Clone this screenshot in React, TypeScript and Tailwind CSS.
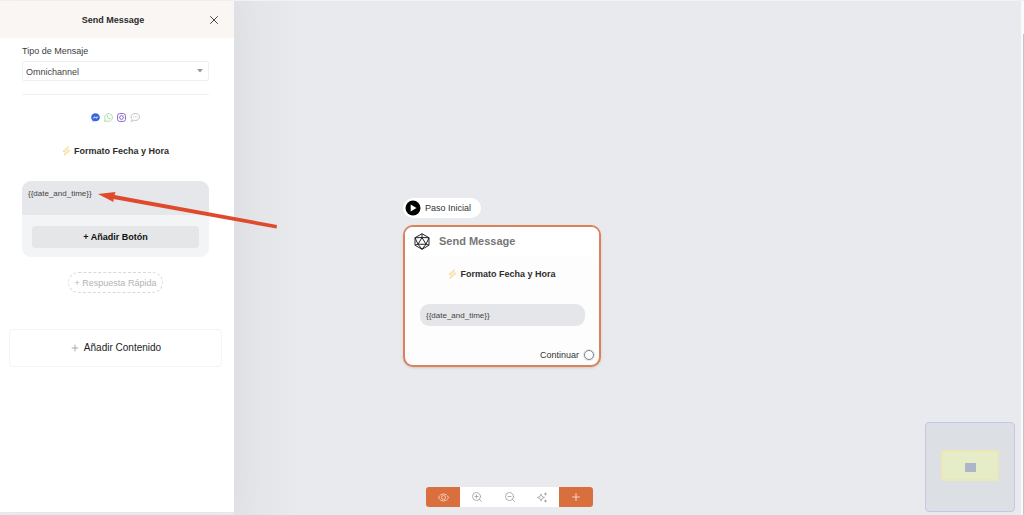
import type { ReactNode } from 'react';
import { Plus, X, ZoomIn, ZoomOut } from 'lucide-react';

function Bolt() {
  return (
    <svg viewBox="0 0 16 18" className="h-[10px] w-[9px] shrink-0" fill="#fff3cf" stroke="#f7d795" strokeWidth="1.5" strokeLinejoin="round" aria-hidden="true">
      <path d="M11.5 1 1.5 9.5 7 10.5 3.5 17 14.5 8 8.5 7.2Z" />
    </svg>
  );
}

function Messenger() {
  return (
    <svg viewBox="0 0 18 18" className="size-[9px]" aria-hidden="true">
      <path d="M9 .3C4 .3 .3 4 .3 8.700c0 2.600 1.100 4.700 2.900 6.200v2.800l2.700-1.500c1 .3 2 .4 3.100.4 5 0 8.700-3.500 8.700-8.200S14 .3 9 .3Z" fill="#3a66dc" />
      <path d="m3.600 11 3.700-4 2.500 2.200 4.600-2.400-3.700 4-2.500-2.100Z" fill="#fff" stroke="#fff" strokeWidth=".5" />
    </svg>
  );
}

function WhatsApp() {
  return (
    <svg viewBox="0 0 18 18" className="size-[9px]" fill="none" stroke="#8fd48b" strokeWidth="1.5" aria-hidden="true">
      <path d="m1 17 1.300-4.300A7.800 7.800 0 1 1 5.400 15.800Z" />
      <path d="M6.300 5.200c-1.500 1.500.2 4 1.800 5.500s3.800 2.700 5 1.100c.6-.8-.8-1.500-1.600-1.800l-1.200 1C9 10.500 8 9.400 7.300 8.200l.8-1.100c-.4-1-.9-2-1.800-1.900Z" fill="#8fd48b" stroke="none" />
    </svg>
  );
}

function Instagram() {
  return (
    <svg viewBox="0 0 18 18" className="size-[9px]" fill="none" stroke="#7e57c2" strokeWidth="1.800" aria-hidden="true">
      <rect x="1.200" y="1.200" width="15.600" height="15.600" rx="4" />
      <circle cx="9" cy="9" r="3.700" />
      <circle cx="13.400" cy="4.600" r=".6" fill="#7e57c2" stroke="none" />
    </svg>
  );
}

function Chat() {
  return (
    <svg viewBox="0 0 20 18" className="h-[9px] w-[10px]" fill="none" stroke="#aeb0b3" strokeWidth="1.500" aria-hidden="true">
      <path d="M10.500 1C5.500 1 2 3.900 2 7.800c0 2.100.9 3.700 2.300 4.900 0 1.600-1 2.800-2.400 3.900 2.200 0 4-.8 5.200-2 1.100.3 2.200.4 3.400.4 5 0 8.500-3 8.500-7.200S15.500 1 10.500 1Z" />
      <path d="M6.200 7.800h1.600m2 0h1.600m2 0H15" strokeWidth="1.700" />
    </svg>
  );
}

function Die() {
  return (
    <svg viewBox="0 0 32 34" className="h-[17px] w-4" fill="none" stroke="#242424" strokeWidth="2" strokeLinejoin="round" aria-hidden="true">
      <path d="M16 1.500 30 9.500v15L16 32.500 2 24.500v-15Z" />
      <path d="m16 9 8 13.500H8ZM16 1.500V9M2 9.500 16 9l14 .5M2 9.500l6 13-6 2m28-15-6 13 6 2M8 22.500l8 10 8-10" />
    </svg>
  );
}

function Sparkles() {
  return (
    <svg viewBox="0 0 22 22" className="size-[11px]" fill="none" stroke="currentColor" strokeWidth="1.700" strokeLinejoin="round" aria-hidden="true">
      <path d="m8 4 2 5 5 2-5 2-2 5-2-5-5-2 5-2Z" />
      <path d="M17 1v6m-3-3h6m-3 11v6m-3-3h6" />
    </svg>
  );
}

function FormatTitle() {
  return (
    <h2 className="flex items-center justify-center gap-[3px] text-[9px] leading-3 font-bold text-[#2d2d2d]">
      <Bolt />
      Formato Fecha y Hora
    </h2>
  );
}

function ToolButton({ label, accent = false, children }: { label: string; accent?: boolean; children: ReactNode }) {
  return (
    <button
      type="button"
      aria-label={label}
      className={accent ? 'flex h-5 w-[34px] items-center justify-center bg-[#d96f3d] text-[#ffe3d5] first:rounded-l-[3px] last:rounded-r-[3px]' : 'flex h-5 w-[33px] items-center justify-center bg-white text-[#a0a0a0]'}
    >
      {children}
    </button>
  );
}

function Sidebar() {
  return (
    <aside className="mb-[3px] w-[234px] shrink-0 bg-white shadow-[0_0_40px_rgba(0,0,0,0.03)]">
      <header className="flex h-[37px] items-center bg-[#faf6f3] pr-3 pl-5">
        <h1 className="flex-1 text-center text-[9px] leading-3 font-bold text-[#2b2b2b]">Send Message</h1>
        <button type="button" aria-label="Cerrar" className="flex size-4 items-center justify-center text-[#444]">
          <X size={14} strokeWidth={1.7} />
        </button>
      </header>

      <div className="px-[22px] pt-[7px]">
        <label htmlFor="message-type" className="block text-[9px] leading-3 text-[#3d3d3d]">Tipo de Mensaje</label>
        <div className="relative mt-1 mr-[3px]">
          <select id="message-type" className="block h-5 w-full appearance-none rounded-[2px] border border-[#efefef] bg-white pt-px pl-[3px] text-[9px] leading-3 text-[#444]">
            <option>Omnichannel</option>
          </select>
          <svg viewBox="0 0 6 4" className="pointer-events-none absolute top-2 right-[6px] h-1 w-[6px]" fill="#999" aria-hidden="true">
            <path d="M0 0h6L3 3.500Z" />
          </svg>
        </div>
        <hr className="mt-[13px] mr-[3px] border-[#f0f0f0]" />

        <div className="mt-[18px] mr-[3px] flex items-center justify-center gap-1">
          <Messenger />
          <WhatsApp />
          <Instagram />
          <Chat />
        </div>
        <div className="mt-[23px] mr-[3px]">
          <FormatTitle />
        </div>

        <section className="mt-6 mr-[3px] overflow-hidden rounded-[9px] bg-[#f3f4f6]">
          <textarea
            aria-label="Mensaje"
            defaultValue="{{date_and_time}}"
            className="block h-[34px] w-full resize-none bg-[#e5e7ea] px-[6px] pt-2 text-[8px] leading-[10px] text-[#444]"
          />
          <div className="px-[10px] pt-[11px] pb-[9px]">
            <button type="button" className="block h-[22px] w-full rounded-[4px] bg-[#e5e6e8] text-[9px] leading-3 font-bold text-[#111]">
              + Añadir Botón
            </button>
          </div>
        </section>

        <div className="mt-[15px] mr-[3px] flex justify-center">
          <button type="button" className="h-[21px] rounded-full border border-dashed border-[#d9d9d9] px-[6px] text-[9px] leading-3 text-[#b4b4b4]">
            + Respuesta Rápida
          </button>
        </div>
      </div>

      <div className="mt-9 pr-3 pl-[9px]">
        <button type="button" className="flex h-[38px] w-full items-center justify-center gap-1 rounded-[4px] border border-[#f3f4f4] text-[10px] leading-3 text-[#222]">
          <Plus size={10} strokeWidth={2} className="text-[#999]" />
          Añadir Contenido
        </button>
      </div>
    </aside>
  );
}

function MessageNode() {
  return (
    <div className="absolute top-[197px] left-[169px] w-[198px]">
      <div className="flex h-5 w-fit items-center gap-1 rounded-full bg-white pr-[10px] pl-[2px] text-[9px] leading-3 text-[#333]">
        <svg viewBox="0 0 16 16" className="size-4" aria-hidden="true">
          <circle cx="8" cy="8" r="7.500" />
          <path d="M5.700 4.500v7L11.500 8Z" fill="#fff" />
        </svg>
        Paso Inicial
      </div>
      <article className="mt-[7px] flex flex-col rounded-[10px] border-2 border-[#dc8258] bg-[#fdfdfd] shadow-sm">
        <header className="flex h-[30px] items-center gap-[9px] rounded-t-lg bg-white px-[9px] pb-[2px]">
          <Die />
          <h2 className="text-[11px] leading-4 font-bold text-[#777]">Send Message</h2>
        </header>
        <div className="mt-[11px]">
          <FormatTitle />
        </div>
        <p className="mt-6 mr-[14px] ml-[15px] h-[22px] rounded-[9px] bg-[#e5e6e9] px-[6px] pt-[7px] text-[8px] leading-[10px] text-[#444]">
          {'{{date_and_time}}'}
        </p>
        <footer className="mt-[23px] flex items-center justify-end gap-[5px] pr-[5px] pb-1 text-[9px] leading-3 text-[#333]">
          Continuar
          <span className="size-[10px] rounded-full border border-[#7d8697] bg-white ring-1 ring-[#7d8697]/20" />
        </footer>
      </article>
    </div>
  );
}

function Canvas() {
  return (
    <main className="relative flex-1 overflow-hidden bg-linear-to-r from-[#e1e3e6] via-[#e8eaed] via-[70px] to-[#e8eaed]">
      <MessageNode />
      <div role="toolbar" aria-label="Controles" className="absolute bottom-2 left-[192px] flex">
        <ToolButton label="Vista previa" accent>
          <svg viewBox="0 0 22 18" className="h-[9px] w-[11px]" fill="none" stroke="currentColor" strokeWidth="1.500" aria-hidden="true">
            <path d="M1 9c2.300-4.600 5.700-7 10-7s7.700 2.400 10 7c-2.300 4.600-5.700 7-10 7S3.300 13.600 1 9Z" />
            <circle cx="11" cy="9" r="4" />
          </svg>
        </ToolButton>
        <ToolButton label="Acercar"><ZoomIn size={12} strokeWidth={1.7} /></ToolButton>
        <ToolButton label="Alejar"><ZoomOut size={12} strokeWidth={1.7} /></ToolButton>
        <ToolButton label="Ordenar"><Sparkles /></ToolButton>
        <ToolButton label="Agregar" accent><Plus size={12} strokeWidth={1.7} /></ToolButton>
      </div>
      <div className="absolute right-[6px] bottom-[3px] flex size-[90px] items-center justify-center rounded-[4px] border border-[#c5c6e8] bg-[#dce0e5]">
        <div className="mb-[3px] flex h-[31px] w-[58px] items-center justify-center border-2 border-[#ece7b7] bg-[#e6ebc8]">
          <div className="mt-[3px] h-[9px] w-[11px] bg-[#adb5c8]" />
        </div>
      </div>
    </main>
  );
}

export default function App() {
  return (
    <div className="relative flex min-h-screen border-t border-[#f1f2f4] bg-[#e9ebee] font-['Liberation_Sans',Arial,sans-serif]">
      <div className="z-10 flex">
        <Sidebar />
      </div>
      <Canvas />
      <div className="flex w-[3px] justify-end bg-[#fafafa] pt-[33px]">
        <div className="w-px bg-[#c4c4c6]" />
      </div>
      <svg viewBox="0 0 180 40" className="pointer-events-none absolute top-[189px] left-[98px] z-20 h-10 w-[180px]" fill="#e04a2c" aria-hidden="true">
        <path d="M0 4 17.500 2 16.500 5 179 35 178.500 38.500 15.500 9 15.500 12Z" />
      </svg>
    </div>
  );
}
